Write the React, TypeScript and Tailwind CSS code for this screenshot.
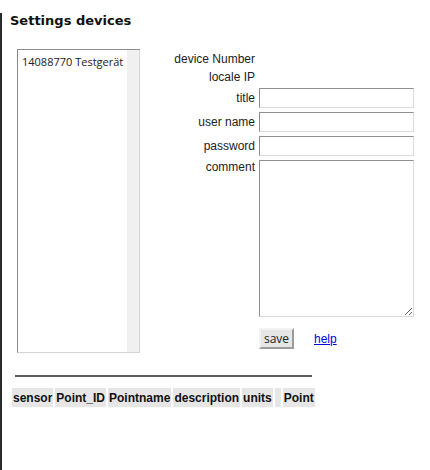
import React from "react";

const labelCls = "flex items-center justify-end pr-[4px] text-[12px] leading-[14px] text-[#222]";
const inputCls =
  "h-[20px] w-[155px] border border-t-[#909090] border-l-[#909090] border-b-[#dcdcdc] border-r-[#dcdcdc] bg-white px-1 text-[12px] outline-none";

const columns = ["sensor", "Point_ID", "Pointname", "description", "units", "", "Point"];

export default function App() {
  return (
    <div className="h-[470px] bg-white pt-[3px]" style={{ fontFamily: '"Liberation Sans", Arial, sans-serif' }}>
      <div className="h-full border-l-2 border-[#2a2a2a] pl-[8px]">
        <h1
          className="mt-[10px] text-[13px] leading-[16px] font-bold text-[#111]"
          style={{ fontFamily: '"DejaVu Sans", Verdana, sans-serif' }}
        >
          Settings devices
        </h1>

        <div className="mt-[20px] flex items-start">
          {/* device list */}
          <div className="ml-[7px] flex h-[304px] w-[123px] border border-t-[#8c8c8c] border-l-[#8c8c8c] border-b-[#d4d4d4] border-r-[#d4d4d4] bg-white">
            <div
              className="flex-1 pl-[4px] pt-[4px] text-[11px] leading-[15px] text-[#222]"
              style={{ fontFamily: '"Open Sans", "Noto Sans", sans-serif' }}
            >
              14088770 Testgerät
            </div>
            <div className="w-[12px] bg-[#f0f0f0]" />
          </div>

          {/* form */}
          <div className="mt-[1px] flex flex-col">
            <div className="grid grid-cols-[119px_155px]">
              <div className={`${labelCls} h-[18px]`}>device Number</div>
              <div />
              <div className={`${labelCls} h-[18px]`}>locale IP</div>
              <div />
            </div>
            <div className="mt-[2px] grid grid-cols-[119px_155px] gap-y-[4px]">
              <div className={labelCls}>title</div>
              <input className={inputCls} />
              <div className={labelCls}>user name</div>
              <input className={inputCls} />
              <div className={labelCls}>password</div>
              <input type="password" className={inputCls} />
              <div className={`${labelCls} items-start`}>comment</div>
              <textarea className="h-[157px] w-[155px] border border-t-[#909090] border-l-[#909090] border-b-[#dcdcdc] border-r-[#dcdcdc] bg-white outline-none" />
            </div>
            <div className="mt-[11px] ml-[119px] flex items-center gap-[20px]">
              <button
                className="h-[21px] w-[35px] border-2 border-t-[#f2f2f2] border-l-[#f2f2f2] border-b-[#9c9c9c] border-r-[#9c9c9c] bg-[#e6e6e6] text-[12px] leading-[15px] text-[#222]"
                style={{ fontFamily: '"Open Sans", "Noto Sans", sans-serif' }}
              >
                save
              </button>
              <a href="#" className="text-[12px] leading-[14px] text-[#0000ee] underline">
                help
              </a>
            </div>
          </div>
        </div>

        <div className="mt-[22px] ml-[5px] h-[2px] w-[297px] bg-[#5c5c5c]" />

        <table className="mt-[9px] border-separate border-spacing-[2px]">
          <thead>
            <tr>
              {columns.map((c, i) => (
                <th
                  key={i}
                  className={`h-[19px] bg-[#e6e6e6] px-[1px] py-0 text-[12px] leading-[14px] font-bold text-[#111] ${c === "" ? "w-[6px]" : ""}`}
                >
                  {c}
                </th>
              ))}
            </tr>
          </thead>
        </table>
      </div>
    </div>
  );
}
